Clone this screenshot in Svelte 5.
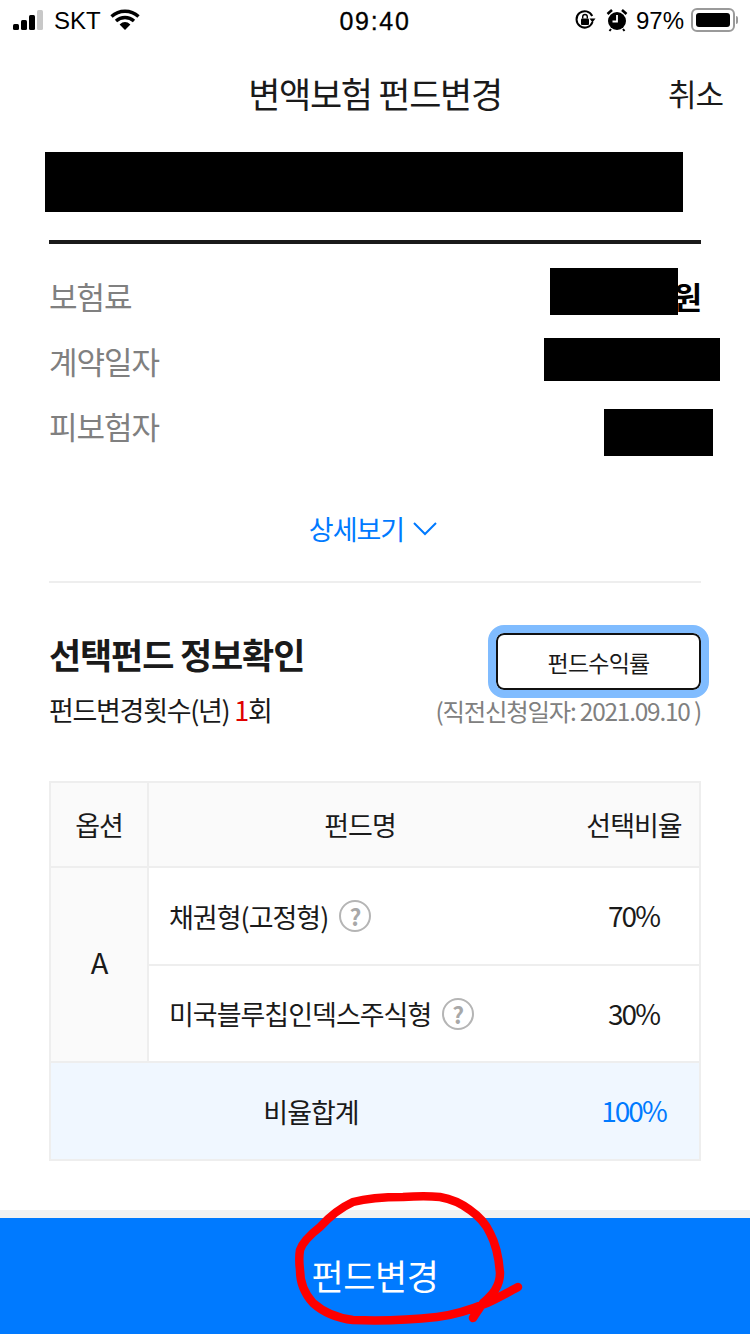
<script>
  const summary = [
    { label: '보험료', value: '원', strong: true },
    { label: '계약일자', value: '' },
    { label: '피보험자', value: '' }
  ];

  const funds = [
    { name: '채권형(고정형)', ratio: '70%' },
    { name: '미국블루칩인덱스주식형', ratio: '30%' }
  ];

  const masks = [
    { x: 45, y: 152, w: 638, h: 60 },
    { x: 550, y: 268, w: 128, h: 47 },
    { x: 544, y: 338, w: 176, h: 43 },
    { x: 604, y: 409, w: 109, h: 47 }
  ];
</script>

<div class="page">
  <div class="status">
    <div class="status-left">
      <div class="signal">
        <i style="height: 6px"></i>
        <i style="height: 10px"></i>
        <i style="height: 15px"></i>
        <i class="off" style="height: 20px"></i>
      </div>
      <span class="carrier">SKT</span>
      <svg width="30" height="22" viewBox="0 0 30 22">
        <path d="M1.5 7.5 A20 20 0 0 1 28.5 7.5" fill="none" stroke="#000" stroke-width="3.4" />
        <path d="M6 12 A13.5 13.5 0 0 1 24 12" fill="none" stroke="#000" stroke-width="3.4" />
        <path d="M9.6 15.4 Q15 10.6 20.4 15.4 L15 21 Z" fill="#000" />
      </svg>
    </div>
    <div class="time">09:40</div>
    <div class="status-right">
      <svg width="22" height="22" viewBox="0 0 22 22">
        <path d="M18.5 13 A8.2 8.2 0 1 1 18.2 7" fill="none" stroke="#000" stroke-width="2" />
        <path d="M15.5 9.5 L21.5 9.5 L18.5 13.5 Z" fill="#000" />
        <rect x="7" y="9.5" width="8" height="6.5" rx="1" fill="#000" />
        <path d="M8.7 9.5 V7.8 A2.3 2.3 0 0 1 13.3 7.8 V9.5" fill="none" stroke="#000" stroke-width="1.4" />
      </svg>
      <svg class="alarm" width="22" height="24" viewBox="0 0 22 24">
        <circle cx="11" cy="13" r="9" fill="#000" />
        <path d="M1.5 6 L6 2 M20.5 6 L16 2" stroke="#000" stroke-width="2.6" />
        <path d="M11 7 V13.5 H6.5" fill="none" stroke="#fff" stroke-width="1.8" />
        <path d="M5 21 L3.5 23 M17 21 L18.5 23" stroke="#000" stroke-width="2" />
      </svg>
      <span class="pct">97%</span>
      <div class="battery"><div class="level"></div></div>
      <div class="nub"></div>
    </div>
  </div>

  <header class="top">
    <h1>변액보험 펀드변경</h1>
    <button class="cancel">취소</button>
  </header>

  <div class="contract-name"></div>

  <section class="summary">
    {#each summary as row}
      <div class="row">
        <span class="label">{row.label}</span>
        <span class="value" class:strong={row.strong}>{row.value}</span>
      </div>
    {/each}
  </section>

  <div class="more">
    <span>상세보기</span>
    <svg width="26" height="16" viewBox="0 0 26 16">
      <path d="M2 3 L13 14 L24 3" fill="none" stroke="#007aff" stroke-width="2" />
    </svg>
  </div>

  <section class="fund-info">
    <div class="fund-head">
      <h2>선택펀드 정보확인</h2>
      <button class="yield">펀드수익률</button>
    </div>
    <div class="fund-meta">
      <span class="count">펀드변경횟수(년) <em>1</em>회</span>
      <span class="last">(직전신청일자: 2021.09.10 )</span>
    </div>
  </section>

  <div class="table">
    <div class="cell th opt">옵션</div>
    <div class="cell th name-h">펀드명</div>
    <div class="cell th ratio-h">선택비율</div>
    <div class="cell side">A</div>
    {#each funds as fund, i}
      <div class="cell fund" class:first={i === 0}>
        <span>{fund.name}</span>
        <span class="help">?</span>
      </div>
      <div class="cell pct-cell" class:first={i === 0}>{fund.ratio}</div>
    {/each}
    <div class="cell total-label">비율합계</div>
    <div class="cell total-value">100%</div>
  </div>

  <div class="footer">
    <div class="strip"></div>
    <button class="submit">펀드변경</button>
  </div>

  {#each masks as m}
    <div class="mask" style="left: {m.x}px; top: {m.y}px; width: {m.w}px; height: {m.h}px"></div>
  {/each}

  <svg class="scribble" width="750" height="1334" viewBox="0 0 750 1334">
    <path
      d="M518 1287 C505 1294 496 1299 487 1303 C470 1310 455 1315 437 1317 C410 1320 380 1321 353 1320 C335 1318 322 1311 313 1303 C304 1293 300 1282 300 1270 C299 1262 299 1256 300 1250 C303 1241 311 1234 320 1227 C330 1216 340 1208 353 1202 C368 1198 385 1197 403 1197 C418 1196 430 1196 440 1197 C452 1199 462 1204 470 1210 C480 1217 486 1224 490 1233 C497 1246 499 1260 500 1273 C500 1287 492 1295 483 1303 C479 1309 476 1313 473 1318"
      fill="none"
      stroke="#fe0000"
      stroke-width="8.5"
      stroke-linecap="round"
      stroke-linejoin="round"
    />
  </svg>
</div>

<style>
  :global(body) {
    margin: 0;
    background: #fff;
  }

  .page {
    position: relative;
    width: 750px;
    height: 1334px;
    overflow: hidden;
    background: #fff;
    color: #1a1a1a;
    font-family: 'Noto Sans CJK KR', 'Noto Sans', sans-serif;
  }

  button {
    font-family: inherit;
    padding: 0;
    border: 0;
    background: none;
    color: inherit;
  }

  .status {
    display: grid;
    grid-template-columns: 1fr auto 1fr;
    align-items: center;
    height: 40px;
    color: #000;
    font-family: 'Liberation Sans', sans-serif;
    font-size: 24px;
  }

  .status-left {
    display: flex;
    align-items: center;
    padding-left: 13px;
  }

  .signal {
    display: flex;
    align-items: flex-end;
    gap: 2px;
    height: 20px;
    margin-right: 11px;
  }

  .signal i {
    display: block;
    width: 6px;
    border-radius: 1.5px;
    background: #000;
  }

  .signal i.off {
    background: #c8c8c8;
  }

  .carrier {
    margin-right: 9px;
    padding-top: 2px;
  }

  .time {
    padding-top: 2px;
    font-size: 25px;
    letter-spacing: 1.7px;
    -webkit-text-stroke: 0.3px #000;
  }

  .status-right {
    display: flex;
    align-items: center;
    justify-content: flex-end;
    padding-right: 12px;
  }

  .alarm {
    margin-left: 10px;
    margin-right: 8px;
  }

  .pct {
    margin-right: 7px;
    padding-top: 2px;
  }

  .battery {
    box-sizing: border-box;
    width: 44px;
    height: 24px;
    padding: 3px;
    border: 2px solid #9a9a9a;
    border-radius: 6px;
  }

  .level {
    height: 100%;
    border-radius: 3px;
    background: #000;
  }

  .nub {
    width: 2px;
    height: 8px;
    margin-left: 1px;
    border-radius: 0 2px 2px 0;
    background: #9a9a9a;
  }

  .top {
    position: relative;
    display: flex;
    justify-content: center;
    align-items: center;
    height: 104px;
  }

  h1 {
    margin: 0;
    font-size: 35px;
    font-weight: 400;
    letter-spacing: -1.3px;
  }

  .cancel {
    position: absolute;
    right: 27px;
    top: 50%;
    transform: translateY(-50%);
    font-size: 31px;
    letter-spacing: -1px;
  }

  .contract-name {
    height: 96px;
    margin: 0 49px;
    border-bottom: 4px solid #1a1a1a;
  }

  .summary {
    display: flex;
    flex-direction: column;
    margin: 19px 49px 0;
  }

  .row {
    display: flex;
    justify-content: space-between;
    align-items: center;
    height: 65px;
    font-size: 31px;
    letter-spacing: -1px;
  }

  .label {
    color: #808080;
  }

  .value.strong {
    font-weight: 700;
    color: #000;
  }

  .more {
    display: flex;
    justify-content: center;
    align-items: center;
    gap: 8px;
    height: 98px;
    margin: 21px 49px 0;
    padding-bottom: 4px;
    border-bottom: 2px solid #eee;
    color: #007aff;
    font-size: 27px;
    letter-spacing: -1px;
  }

  .more svg {
    margin-right: 3px;
  }

  .fund-info {
    margin: 0 49px;
  }

  .fund-head {
    display: flex;
    justify-content: space-between;
    align-items: flex-start;
    height: 54px;
    margin-top: 50px;
  }

  h2 {
    margin: -4px 0 0;
    font-size: 35px;
    line-height: 50px;
    font-weight: 700;
    letter-spacing: -1.15px;
  }

  .yield {
    box-sizing: border-box;
    width: 205px;
    height: 57px;
    border: 2px solid #111;
    border-radius: 8px;
    background: #fff;
    outline: 8px solid #80bcff;
    font-size: 23px;
    letter-spacing: -0.8px;
  }

  .fund-meta {
    display: flex;
    justify-content: space-between;
    align-items: center;
    height: 44px;
  }

  .count {
    padding-top: 1px;
    font-size: 27px;
    letter-spacing: -1.3px;
  }

  .count em {
    color: #e00000;
    font-style: normal;
  }

  .last {
    padding-top: 3px;
    color: #808080;
    font-size: 24.4px;
    letter-spacing: -1.2px;
  }

  .table {
    display: grid;
    grid-template-columns: 98px 1fr 122px;
    grid-template-rows: 85px 96px 97px 98px;
    box-sizing: border-box;
    height: 380px;
    margin: 50px 49px 0;
    border: 2px solid #eee;
    font-size: 27px;
    letter-spacing: -1px;
  }

  .cell {
    display: flex;
    align-items: center;
  }

  .th {
    justify-content: center;
    background: #fafafa;
    border-bottom: 2px solid #eee;
  }

  .opt {
    border-right: 2px solid #eee;
  }

  .name-h {
    padding-right: 6px;
  }

  .ratio-h {
    padding-right: 8px;
  }

  .side {
    grid-row: 2 / span 2;
    justify-content: center;
    padding-bottom: 8px;
    background: #fafafa;
    border-right: 2px solid #eee;
    font-size: 29px;
  }

  .fund {
    gap: 11px;
    padding-left: 20px;
    border-top: 2px solid #eee;
  }

  .fund.first,
  .pct-cell.first {
    border-top: 0;
  }

  .pct-cell {
    grid-column: 3;
    justify-content: center;
    padding-right: 9px;
    padding-bottom: 2px;
    border-top: 2px solid #eee;
    font-size: 28px;
    letter-spacing: -2px;
  }

  .help {
    box-sizing: border-box;
    display: flex;
    justify-content: center;
    align-items: center;
    width: 32px;
    height: 32px;
    border: 2px solid #b5b5b5;
    border-radius: 50%;
    color: #a8a8a8;
    font-size: 23px;
    font-weight: 700;
    letter-spacing: 0;
  }

  .total-label {
    grid-column: 1 / span 2;
    justify-content: center;
    padding-right: 6px;
    background: #f0f7ff;
    border-top: 2px solid #eee;
  }

  .total-value {
    justify-content: center;
    padding-right: 9px;
    padding-bottom: 2px;
    background: #f0f7ff;
    border-top: 2px solid #eee;
    color: #007aff;
    font-size: 28px;
    letter-spacing: -2px;
  }

  .footer {
    margin-top: 49px;
  }

  .strip {
    height: 8px;
    background: #f2f2f2;
  }

  .submit {
    display: block;
    width: 100%;
    height: 116px;
    padding-bottom: 4px;
    background: #007aff;
    color: #fff;
    font-size: 35px;
    letter-spacing: -0.5px;
  }

  .mask {
    position: absolute;
    background: #000;
  }

  .scribble {
    position: absolute;
    left: 0;
    top: 0;
    pointer-events: none;
  }
</style>
